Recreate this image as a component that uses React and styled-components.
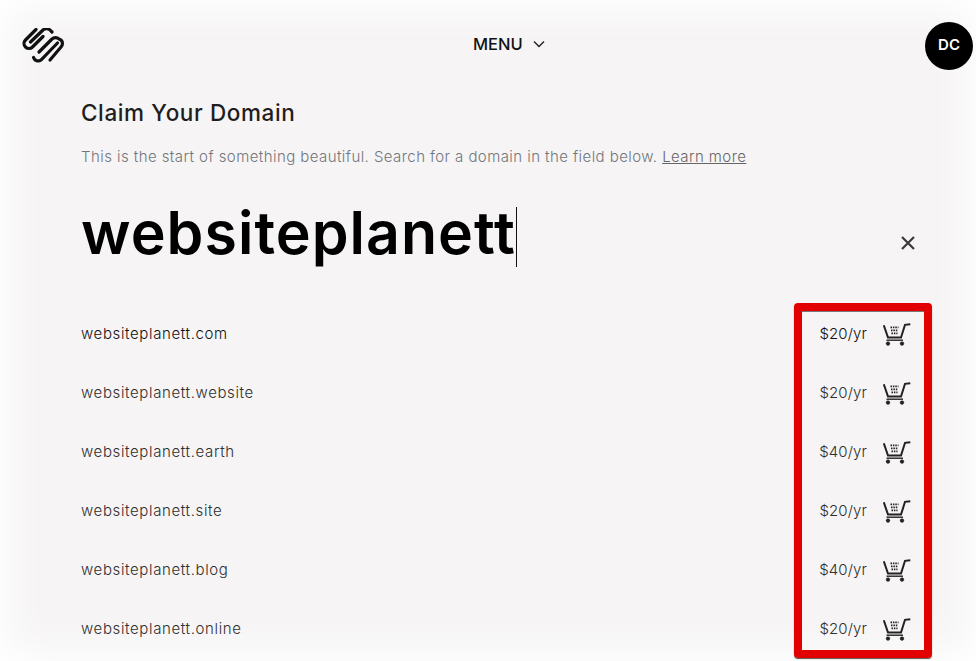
import React from "react";
import styled, { createGlobalStyle } from "styled-components";

const domains = [
  { name: "websiteplanett.com", price: "$20/yr", active: true },
  { name: "websiteplanett.website", price: "$20/yr" },
  { name: "websiteplanett.earth", price: "$40/yr" },
  { name: "websiteplanett.site", price: "$20/yr" },
  { name: "websiteplanett.blog", price: "$40/yr" },
  { name: "websiteplanett.online", price: "$20/yr" },
];

const GlobalStyle = createGlobalStyle`
  html, body {
    margin: 0;
    padding: 0;
    background: #f6f4f5;
  }
`;

const Page = styled.div`
  position: relative;
  width: 976px;
  height: 661px;
  overflow: hidden;
  box-sizing: border-box;
  background: #f6f4f5;
  font-family: Inter, "Liberation Sans", sans-serif;
  color: #1d1d1d;
`;

const Vignette = styled.div`
  position: absolute;
  inset: 0;
  pointer-events: none;
  box-shadow: inset 0 0 40px 10px #ffffff;
`;

const Header = styled.header`
  position: relative;
  display: flex;
  align-items: center;
  justify-content: space-between;
  height: 90px;
  padding: 0 3px 0 22px;
`;

const Logo = styled.svg`
  width: 43px;
  height: 36px;
  margin-bottom: -1px;
  fill: none;
  stroke: #111;
  stroke-width: 3.2;
  stroke-linecap: round;
`;

const Menu = styled.div`
  position: absolute;
  left: 473px;
  top: 34px;
  display: flex;
  align-items: center;
  gap: 10px;
  font-size: 16.5px;
  font-weight: 500;
  line-height: 20px;
  color: #111;
`;

const Avatar = styled.div`
  display: flex;
  align-items: center;
  justify-content: center;
  width: 48px;
  height: 48px;
  margin-top: 1px;
  padding-bottom: 2px;
  box-sizing: border-box;
  border-radius: 50%;
  background: #000;
  color: #fff;
  font-size: 15px;
  font-weight: 600;
`;

const Main = styled.main`
  position: relative;
  padding: 0 65px 0 81px;
`;

const Title = styled.h1`
  margin: 8px 0 0;
  font-size: 22.5px;
  font-weight: 500;
  line-height: 30px;
  letter-spacing: 0.62px;
  color: #1e1e1e;
`;

const Intro = styled.p`
  margin: 19px 0 0;
  font-size: 15px;
  font-weight: 350;
  line-height: 20px;
  letter-spacing: 0.43px;
  color: #72767b;
`;

const LearnMore = styled.a`
  color: #666;
  text-decoration: underline;
`;

const SearchRow = styled.div`
  display: flex;
  align-items: center;
  justify-content: space-between;
  height: 62px;
  margin-top: 39px;
`;

const SearchText = styled.div`
  display: flex;
  align-items: center;
  color: #000;
`;

const SearchValue = styled.span`
  padding-bottom: 8px;
  font-size: 59px;
  font-weight: 600;
  line-height: 54px;
  letter-spacing: 1.05px;
`;

const Caret = styled.span`
  display: block;
  width: 1px;
  height: 60px;
  background: #111;
`;

const ClearIcon = styled.svg`
  width: 14px;
  height: 14px;
  margin: 12px -4px 0 0;
  stroke: #3a3a3a;
  stroke-width: 2.2;
  fill: none;
`;

const List = styled.ul`
  margin: 35.5px 0 0;
  padding: 0;
  list-style: none;
`;

const Row = styled.li`
  display: flex;
  align-items: center;
  justify-content: space-between;
  height: 59px;
  font-size: 15px;
  font-weight: 350;
  letter-spacing: 0.63px;
  color: ${(props) => (props.$active ? "#111" : "#2f2f2f")};
`;

const PriceBox = styled.div`
  display: flex;
  align-items: center;
  gap: 16px;
`;

const Price = styled.span`
  letter-spacing: 0.12px;
`;

const CartIcon = styled.svg`
  width: 28px;
  height: 23px;
  margin-top: 2px;
  fill: none;
  stroke: #222;
`;

const Highlight = styled.div`
  position: absolute;
  left: 794px;
  top: 303px;
  width: 138px;
  height: 355px;
  box-sizing: border-box;
  border: 8px solid #e30000;
  border-radius: 4px;
  box-shadow: inset 0 1px 0 #777, 0 1px 1px #555;
`;

function Cart() {
  return (
    <CartIcon viewBox="0 0 28 23">
      <path d="M0.8 2.3 L5 14.6 H18 L22 1.8 L27.3 1.2" strokeWidth="2" />
      <path d="M3.5 17.2 H20" strokeWidth="1.4" />
      <path d="M7.5 4.4h8M8 7.4h7M8.5 10.4h6" strokeWidth="1.8" strokeDasharray="1.5 0.9" />
      <circle cx="5" cy="20.6" r="1.8" fill="#222" strokeWidth="0.6" />
      <circle cx="19" cy="20.6" r="1.8" fill="#222" strokeWidth="0.6" />
    </CartIcon>
  );
}

export default function App() {
  return (
    <>
      <GlobalStyle />
      <Page>
        <Vignette />
        <Header>
          <Logo viewBox="22 29 43 36">
            <path d="M36 30.5 L25.5 41 A4.9 4.9 0 0 0 32.5 48 L43 37.5" />
            <path d="M30.5 43 L43 31 A4.9 4.9 0 0 1 50 31 L52 33" />
            <path d="M39 53 L52 40 A4.9 4.9 0 0 1 59 40 L61 41 A4.9 4.9 0 0 1 61 48 L50 61" />
            <path d="M33.5 58.5 A4.9 4.9 0 0 0 41 61 L57.5 44" />
          </Logo>
          <Menu>
            MENU
            <svg width="12" height="8" viewBox="0 0 12 8" fill="none" stroke="#222" strokeWidth="1.4">
              <path d="M1 1.5 L6 6.5 L11 1.5" />
            </svg>
          </Menu>
          <Avatar>DC</Avatar>
        </Header>
        <Main>
          <Title>Claim Your Domain</Title>
          <Intro>
            This is the start of something beautiful. Search for a domain in the field below.{" "}
            <LearnMore>Learn more</LearnMore>
          </Intro>
          <SearchRow>
            <SearchText>
              <SearchValue>websiteplanett</SearchValue>
              <Caret />
            </SearchText>
            <ClearIcon viewBox="0 0 14 14">
              <path d="M1 1 L13 13 M13 1 L1 13" />
            </ClearIcon>
          </SearchRow>
          <List>
            {domains.map((d) => (
              <Row key={d.name} $active={d.active}>
                <span>{d.name}</span>
                <PriceBox>
                  <Price>{d.price}</Price>
                  <Cart />
                </PriceBox>
              </Row>
            ))}
          </List>
        </Main>
        <Highlight />
      </Page>
    </>
  );
}
